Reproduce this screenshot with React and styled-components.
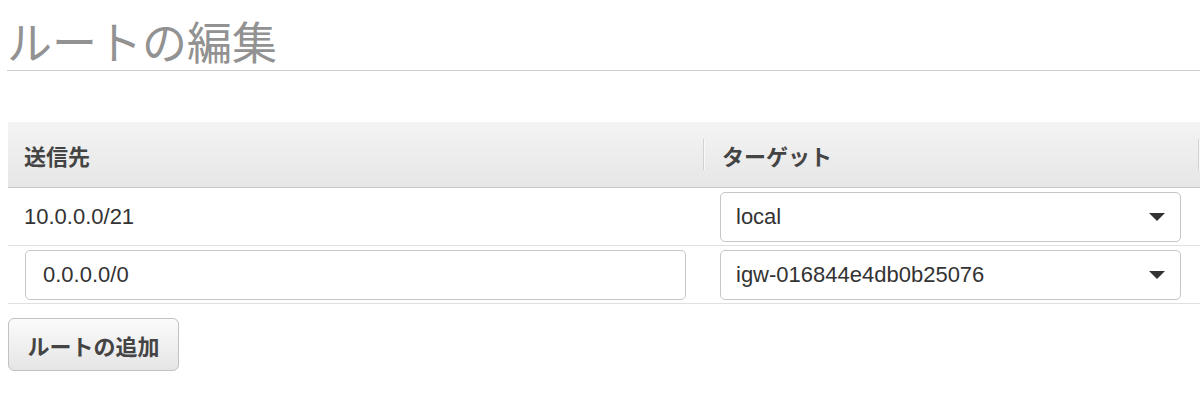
import React from 'react';
import styled, {createGlobalStyle} from 'styled-components';

const GlobalStyle = createGlobalStyle`
  html, body {
    margin: 0;
    padding: 0;
    background: #fff;
    overflow: hidden;
  }
  body {
    font-family: "Liberation Sans", "Noto Sans CJK JP", sans-serif;
    color: #333;
  }
`

const routes = [
    {destination: '10.0.0.0/21', target: 'local', editable: false},
    {destination: '0.0.0.0/0', target: 'igw-016844e4db0b25076', editable: true},
]

const Page = styled.div`
  padding: 18px 0 0 8px;
`

const Title = styled.h1`
  margin: 0 0 0 -1px;
  padding: 0 0 7px 0;
  font-family: "Noto Sans CJK JP", sans-serif;
  font-weight: 400;
  font-size: 45px;
  line-height: 45px;
  color: #929292;
  border-bottom: 1px solid #cfcfcf;
`

const Table = styled.div`
  margin-top: 51px;
  display: grid;
  grid-template-columns: 695px 495px 1fr;
`

const HeadCell = styled.div`
  height: 65px;
  display: flex;
  align-items: center;
  position: relative;
  padding-left: ${props => props.first ? '16px' : '19px'};
  background: linear-gradient(#f4f4f4, #e6e6e6);
  border-bottom: 1px solid #c9c9c9;
  font-family: "Noto Sans CJK JP", sans-serif;
  font-weight: 700;
  font-size: 22px;
  color: #444;

  &::before {
    content: '';
    display: ${props => props.first ? 'none' : 'block'};
    position: absolute;
    left: 0;
    top: 17px;
    bottom: 17px;
    width: 1px;
    background: #d2d2d2;
    box-shadow: 1px 0 0 #f8f8f8;
  }
`

const Cell = styled.div`
  height: 57px;
  display: flex;
  align-items: center;
  padding: 0 ${props => props.last ? '0' : '17px'} 0 ${props => props.pad};
  border-bottom: 1px solid #e0e0e0;
  font-size: 22px;
  color: #333;
`

const TextInput = styled.div`
  box-sizing: border-box;
  width: 100%;
  height: 50px;
  display: flex;
  align-items: center;
  padding-left: 17px;
  border: 1px solid #c6c6c6;
  border-radius: 5px;
  background: #fff;
  font-size: 22px;
  color: #333;
`

const Select = styled(TextInput)`
  justify-content: space-between;
  padding: 0 15px 0 15px;
`

const Caret = styled.span`
  width: 0;
  height: 0;
  border-left: 8px solid transparent;
  border-right: 8px solid transparent;
  border-top: 8px solid #333;
`

const AddButton = styled.button`
  margin-top: 14px;
  box-sizing: border-box;
  width: 171px;
  height: 53px;
  padding: 0;
  border: 1px solid #c2c2c2;
  border-radius: 6px;
  background: linear-gradient(#fbfbfb, #e5e5e5);
  font-family: "Noto Sans CJK JP", sans-serif;
  font-weight: 700;
  font-size: 22px;
  color: #444;
  cursor: pointer;
`

function Row({route}) {
    return (
        <>
            <Cell pad={route.editable ? '17px' : '16px'}>
                {route.editable
                    ? <TextInput>{route.destination}</TextInput>
                    : route.destination}
            </Cell>
            <Cell pad="17px">
                <Select>
                    <span>{route.target}</span>
                    <Caret/>
                </Select>
            </Cell>
            <Cell last pad="0"/>
        </>
    )
}

export default function App() {
    return (
        <Page>
            <GlobalStyle/>
            <Title>ルートの編集</Title>
            <Table>
                <HeadCell first>送信先</HeadCell>
                <HeadCell>ターゲット</HeadCell>
                <HeadCell/>
                {routes.map(route => <Row key={route.destination} route={route}/>)}
            </Table>
            <AddButton>ルートの追加</AddButton>
        </Page>
    )
}
